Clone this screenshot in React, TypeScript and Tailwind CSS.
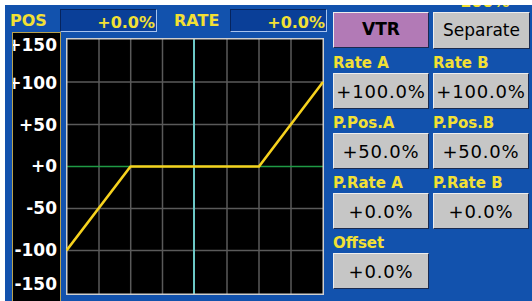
import React from 'react';

const font = "font-['DejaVu_Sans',sans-serif]";

const axisLabels = [
  { text: '+150', top: 4 },
  { text: '+100', top: 42 },
  { text: '+50', top: 84 },
  { text: '+0', top: 125 },
  { text: '-50', top: 167 },
  { text: '-100', top: 209 },
  { text: '-150', top: 243 },
];

const cols = [0.7, 33, 64.7, 96.5, 128, 161, 193, 225, 257];
const rows = [1, 44, 86.5, 128.5, 170.5, 212.5, 256];

function ValueBox({ value }: { value: string }) {
  return (
    <div className="w-[97px] h-[23px] bg-[#0a3f98] border-t border-l border-t-[#06245e] border-l-[#06245e] border-b border-r border-b-[#a8c4f0] border-r-[#a8c4f0] pt-[5px] pr-[1px] text-right text-[16px] font-bold leading-none text-[#f2e034]">
      {value}
    </div>
  );
}

function Btn({ children, purple, bold }: { children: React.ReactNode; purple?: boolean; bold?: boolean }) {
  return (
    <div
      className={`w-[96px] h-[36px] flex items-center justify-center border-t border-l border-t-[#eeeeee] border-l-[#eeeeee] border-b border-r border-b-[#1a2a50] border-r-[#1a2a50] text-black whitespace-nowrap ${
        purple ? 'bg-[#b27ab6]' : 'bg-[#c6c6c6]'
      } ${bold ? 'text-[17px] font-bold' : 'text-[18px] tracking-[0.8px]'}`}
    >
      {children}
    </div>
  );
}

function Label({ children }: { children: React.ReactNode }) {
  return (
    <div className="w-[96px] h-[24px] pt-[5px] text-[15px] leading-[18px] font-bold text-[#f2e034] whitespace-nowrap">
      {children}
    </div>
  );
}

function Chart() {
  return (
    <svg width="258" height="257" viewBox="0 0 258 257" className="block">
      <rect x="0" y="0" width="258" height="257" fill="#000" />
      {cols.slice(1, -1).map((x) =>
        x === 128 ? null : <line key={x} x1={x} y1="0" x2={x} y2="257" stroke="#5a5a5a" strokeWidth="1.5" />
      )}
      {rows.slice(1, -1).map((y) =>
        y === 128.5 ? null : <line key={y} x1="0" y1={y} x2="258" y2={y} stroke="#5a5a5a" strokeWidth="1.5" />
      )}
      <line x1="0" y1="128.5" x2="258" y2="128.5" stroke="#1f9a45" strokeWidth="1.5" />
      <line x1="128" y1="0" x2="128" y2="257" stroke="#6cc8c6" strokeWidth="2" />
      <rect x="0.75" y="0.75" width="256.5" height="255.5" fill="none" stroke="#cfcfcf" strokeWidth="1.5" />
      <polyline
        points="0.5,212.5 64.5,128.5 193,128.5 257,44"
        fill="none"
        stroke="#f6d21e"
        strokeWidth="2.6"
        strokeLinejoin="round"
      />
    </svg>
  );
}

export default function App() {
  return (
    <div className={`w-[532px] h-[301px] bg-white pl-[5px] pt-[5px] overflow-hidden ${font}`}>
      <div className="relative w-[527px] h-[296px] bg-[#1252ad] flex overflow-hidden">
        <span className="absolute left-[455px] top-[-11px] text-[16px] font-bold leading-none text-[#f2e034]">100%</span>

        {/* left: readouts + graph */}
        <div className="w-[323px] flex flex-col">
          <div className="h-[29px] pt-[4px] flex items-start">
            <div className="w-[55px] h-[23px] pl-[5px] flex items-center text-[16px] font-bold text-[#f2e034]">POS</div>
            <ValueBox value="+0.0%" />
            <div className="w-[73px] h-[23px] pl-[17px] flex items-center text-[16px] font-bold text-[#f2e034]">RATE</div>
            <ValueBox value="+0.0%" />
          </div>
          <div className="flex flex-1 items-start">
            <div className="relative ml-[7px] w-[49px] h-[270px] bg-black border border-[#b9a350] border-b-0 overflow-hidden">
              {axisLabels.map((l) => (
                <span
                  key={l.text}
                  className="absolute right-[3px] text-[17px] font-bold leading-none text-white"
                  style={{ top: l.top }}
                >
                  {l.text}
                </span>
              ))}
            </div>
            <div className="ml-[5px] mt-[6px]">
              <Chart />
            </div>
          </div>
        </div>

        {/* right: buttons */}
        <div className="ml-[5px] pt-[7px] flex flex-col">
          <div className="flex gap-[4px] h-[37px]">
            <Btn purple bold>VTR</Btn>
            <div className="w-[97px] h-[37px] flex items-center justify-center bg-[#c6c6c6] border-t border-l border-t-[#eeeeee] border-l-[#eeeeee] border-b border-r border-b-[#1a2a50] border-r-[#1a2a50] text-[17px] text-black">
              Separate
            </div>
          </div>
          <div className="flex gap-[4px]">
            <Label>Rate A</Label>
            <Label>Rate B</Label>
          </div>
          <div className="flex gap-[4px]">
            <Btn>+100.0%</Btn>
            <Btn>+100.0%</Btn>
          </div>
          <div className="flex gap-[4px]">
            <Label>P.Pos.A</Label>
            <Label>P.Pos.B</Label>
          </div>
          <div className="flex gap-[4px]">
            <Btn>+50.0%</Btn>
            <Btn>+50.0%</Btn>
          </div>
          <div className="flex gap-[4px]">
            <Label>P.Rate A</Label>
            <Label>P.Rate B</Label>
          </div>
          <div className="flex gap-[4px]">
            <Btn>+0.0%</Btn>
            <Btn>+0.0%</Btn>
          </div>
          <div className="flex gap-[4px]">
            <Label>Offset</Label>
          </div>
          <div className="flex gap-[4px]">
            <Btn>+0.0%</Btn>
          </div>
        </div>
      </div>
    </div>
  );
}
